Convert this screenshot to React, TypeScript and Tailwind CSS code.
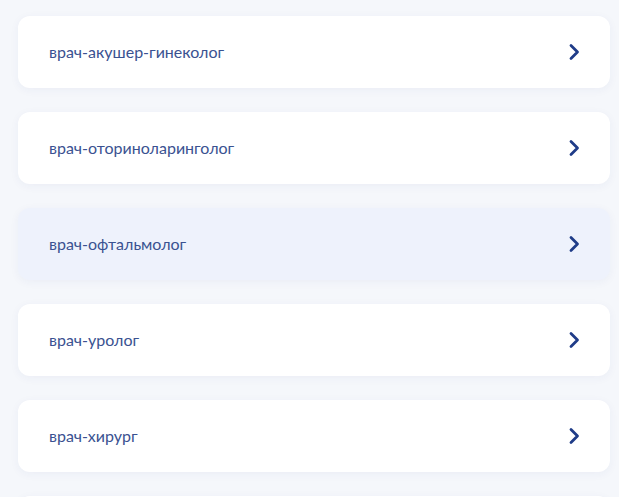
const items = [
  { title: "врач-акушер-гинеколог", active: false },
  { title: "врач-оториноларинголог", active: false },
  { title: "врач-офтальмолог", active: true },
  { title: "врач-уролог", active: false },
  { title: "врач-хирург", active: false },
];

function Chevron() {
  return (
    <svg width="12" height="18" viewBox="0 0 12 18" fill="none" className="text-[#1f3c88]">
      <path d="M3 2.5L9.5 9L3 15.5" stroke="currentColor" strokeWidth="2.8" strokeLinecap="round" strokeLinejoin="round" />
    </svg>
  );
}

export default function App() {
  return (
    <div className="h-[497px] overflow-hidden bg-[#f5f7fb] pl-[18px] pr-[9px] pt-4 font-['Lato',sans-serif]">
      <ul className="flex flex-col gap-6">
        {items.map((item) => (
          <li
            key={item.title}
            className={`flex h-[72px] items-center justify-between rounded-xl pl-[31px] pr-[30px] shadow-[0_2px_10px_rgba(30,60,140,0.05)] ${
              item.active ? "bg-[#eef2fc]" : "bg-white"
            }`}
          >
            <span className="text-[16px] text-[#3a5291]">{item.title}</span>
            <Chevron />
          </li>
        ))}
        <li className="h-[72px] rounded-xl bg-white shadow-[0_2px_10px_rgba(30,60,140,0.05)]" />
      </ul>
    </div>
  );
}
